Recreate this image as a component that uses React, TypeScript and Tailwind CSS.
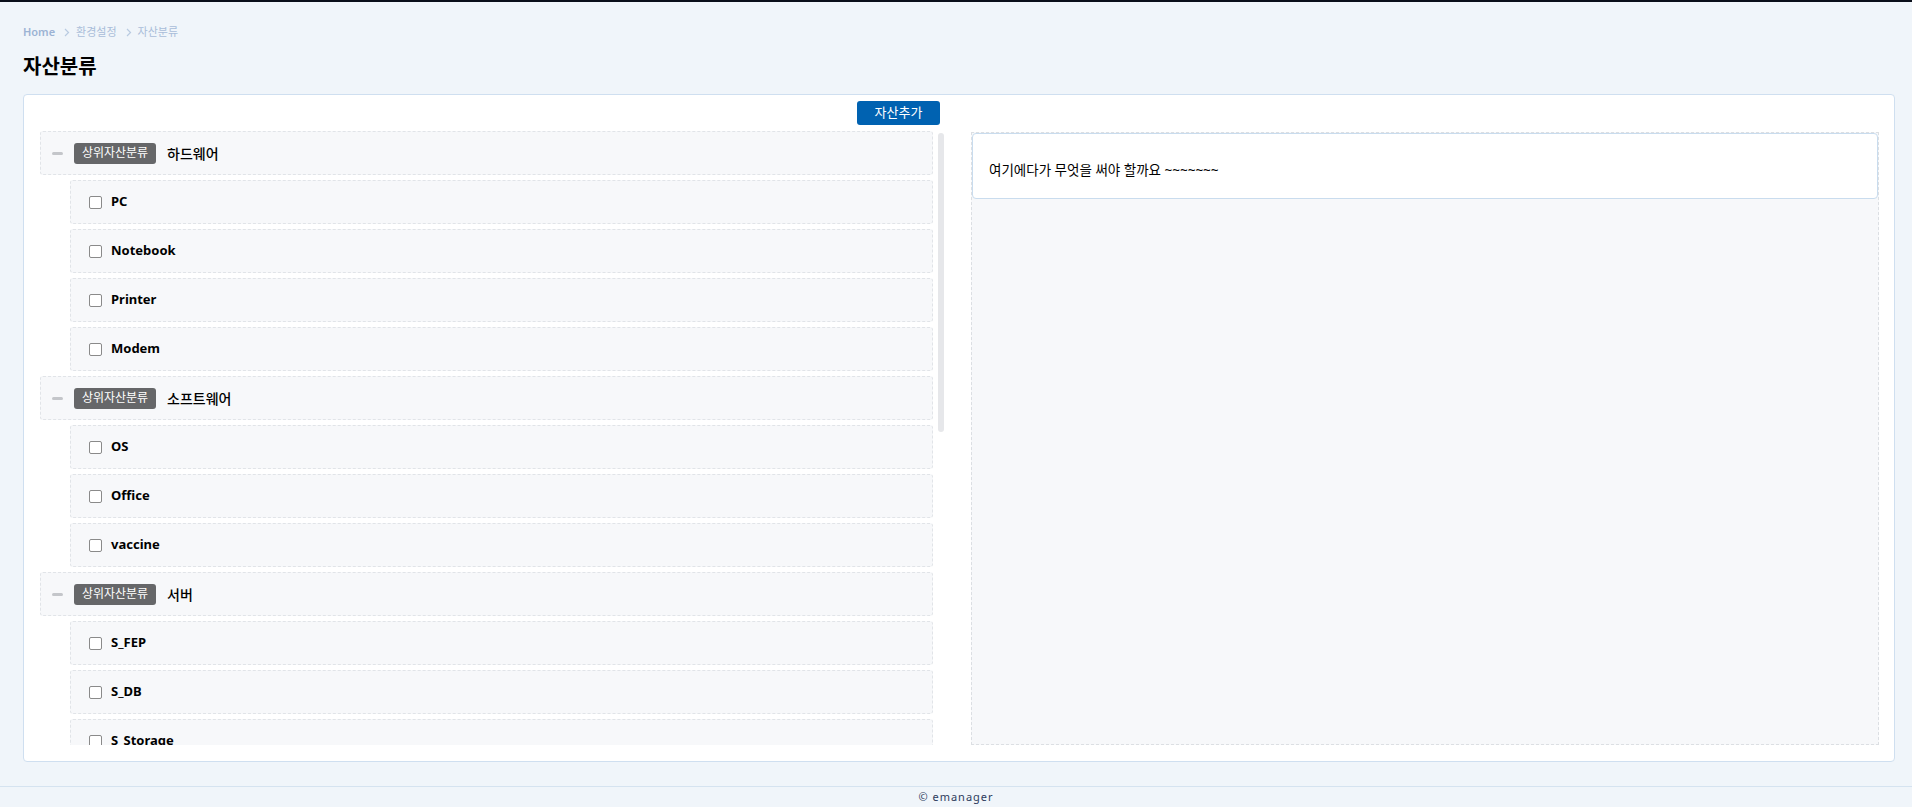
import React from "react";

type Group = {
  name: string;
  items: string[];
};

const groups: Group[] = [
  { name: "하드웨어", items: ["PC", "Notebook", "Printer", "Modem"] },
  { name: "소프트웨어", items: ["OS", "Office", "vaccine"] },
  { name: "서버", items: ["S_FEP", "S_DB", "S_Storage", "S_WEB", "S_WAS"] },
  { name: "네트워크", items: ["Router", "Switch", "Firewall", "L4"] },
  { name: "주변기기", items: ["Monitor", "Scanner", "UPS", "Projector"] },
];

const Chevron = () => (
  <svg width="6" height="9" viewBox="0 0 6 9" className="ml-[9px] mr-[6px]">
    <path d="M1 1l3.5 3.5L1 8" fill="none" stroke="#b9cbe1" strokeWidth="1.2" />
  </svg>
);

const GroupRow = ({ name }: { name: string }) => (
  <div className="h-[44px] mb-[5px] flex items-center pl-[11px] bg-[#f7f8fa] border border-dashed border-[#e1e4e8] rounded-[3px]">
    <span className="w-[11px] h-[3px] rounded-full bg-[#c4c6ca]" />
    <span className="ml-[11px] h-[21px] w-[82px] flex items-center justify-center rounded-[3px] bg-[#666769] text-white text-[12px]">
      상위자산분류
    </span>
    <span className="ml-[11px] text-[14px] font-medium text-black">{name}</span>
  </div>
);

const ItemRow = ({ name }: { name: string }) => (
  <div className="ml-[30px] h-[44px] mb-[5px] flex items-center pl-[18px] bg-[#f7f8fa] border border-dashed border-[#e1e4e8] rounded-[3px]">
    <span className="w-[13px] h-[13px] border border-[#8a8a8a] rounded-[2px] bg-white" />
    <span className="ml-[9px] text-[13px] font-bold text-black">{name}</span>
  </div>
);

export default function App() {
  return (
    <div
      className="min-h-screen bg-[#f0f5fa] flex flex-col"
      style={{ fontFamily: '"Noto Sans", "Noto Sans CJK KR", sans-serif' }}
    >
      <div className="h-[2px] bg-[#0a0f1a]" />

      <div className="pl-[23px] pr-[17px]">
        <div className="pt-[22px] h-[38px] flex items-center text-[11px] leading-[16px]">
          <span className="font-semibold text-[#9cb3d4]">Home</span>
          <Chevron />
          <span className="text-[#a9bdd9]">환경설정</span>
          <Chevron />
          <span className="text-[#a9bdd9]">자산분류</span>
        </div>

        <h1 className="mt-[13px] text-[20px] leading-[28px] font-bold text-black">자산분류</h1>

        <div className="mt-[13px] bg-white border border-[#cfdff0] rounded-[4px] pl-[16px] pr-[15px] pt-[6px] pb-[16px]">
          <div className="grid grid-cols-[904px_1fr] gap-x-[27px]">
            <div className="flex justify-end pr-[4px]">
              <button className="w-[83px] h-[24px] rounded-[3px] bg-[#0062b1] text-white text-[13px]">
                자산추가
              </button>
            </div>
            <div />

            <div className="mt-[6px] h-[614px] flex">
              <div className="flex-1 overflow-hidden pr-[5px]">
                {groups.map((g) => (
                  <div key={g.name}>
                    <GroupRow name={g.name} />
                    {g.items.map((item) => (
                      <ItemRow key={item} name={item} />
                    ))}
                  </div>
                ))}
              </div>
              <div className="w-[6px] pt-[2px]">
                <div className="h-[299px] rounded-[3px] bg-[#e6e7ea]" />
              </div>
            </div>

            <div className="mt-[7px] h-[613px] bg-[#f7f8fa] border border-dashed border-[#dcdfe3]">
              <div className="h-[66px] bg-white border border-[#c9dcee] rounded-[4px] pl-[16px] pt-[27px]">
                <p className="text-[13.5px] leading-[18px] text-black">여기에다가 무엇을 써야 할까요 ~~~~~~~</p>
              </div>
            </div>
          </div>
        </div>
      </div>

      <div className="flex-1" />

      <footer className="h-[21px] border-t border-[#d5e3f0] bg-[#f0f5fa] flex items-center justify-center">
        <span className="text-[11px] tracking-[1px] text-[#2e3b5c]">© emanager</span>
      </footer>
    </div>
  );
}
